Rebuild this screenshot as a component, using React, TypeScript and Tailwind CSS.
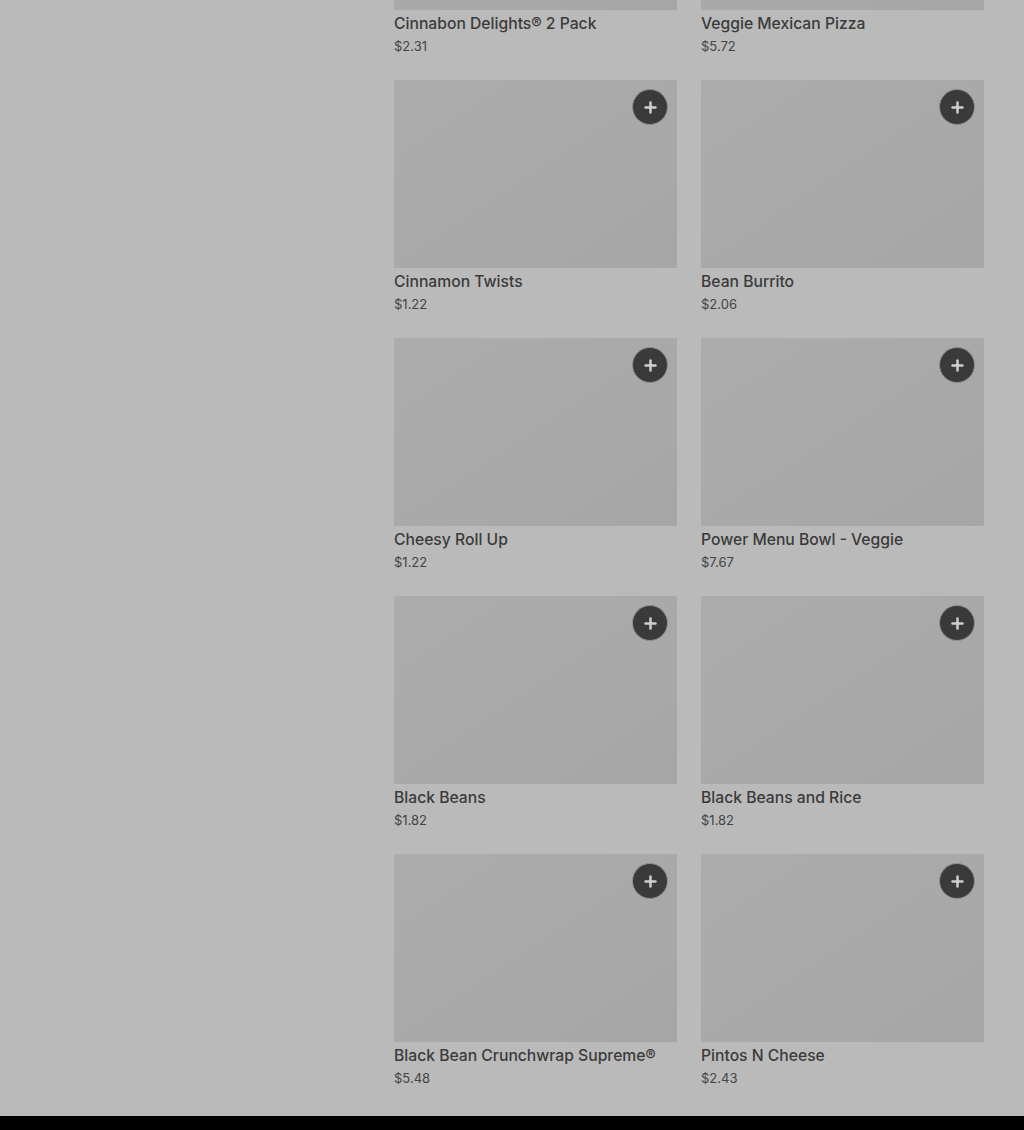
import { Plus } from "lucide-react"

interface Item {
  name: string
  price: string
}

const items: Item[] = [
  { name: "Cinnabon Delights® 2 Pack", price: "$2.31" },
  { name: "Veggie Mexican Pizza", price: "$5.72" },
  { name: "Cinnamon Twists", price: "$1.22" },
  { name: "Bean Burrito", price: "$2.06" },
  { name: "Cheesy Roll Up", price: "$1.22" },
  { name: "Power Menu Bowl - Veggie", price: "$7.67" },
  { name: "Black Beans", price: "$1.82" },
  { name: "Black Beans and Rice", price: "$1.82" },
  { name: "Black Bean Crunchwrap Supreme®", price: "$5.48" },
  { name: "Pintos N Cheese", price: "$2.43" },
]

function ItemCard({ item }: { item: Item }) {
  return (
    <div className="flex flex-col">
      <div className="relative h-[188px] w-full bg-gradient-to-br from-[#acacac] to-[#a6a6a6]">
        <button className="absolute right-[9px] top-[9px] flex h-9 w-9 items-center justify-center rounded-full border border-[#8f8f8f] bg-[#3a3a3a] text-[#cfcfcf]">
          <Plus className="h-[17px] w-[17px]" strokeWidth={3.5} />
        </button>
      </div>
      <div className="mt-[5px] text-[15.7px] font-medium leading-[18px] text-[#3b3b3b]">
        {item.name}
      </div>
      <div className="mt-[5px] text-[13px] leading-[16px] text-[#444444]">{item.price}</div>
    </div>
  )
}

export default function App() {
  return (
    <div
      className="flex h-[1130px] flex-col overflow-hidden bg-[#bababa]"
      style={{ fontFamily: "Inter, 'Noto Sans', sans-serif" }}
    >
      <div className="flex-1 overflow-hidden">
        <div className="ml-[394px] mt-[-178px] grid w-[590px] grid-cols-2 gap-x-6 gap-y-[26px]">
          {items.map((item) => (
            <ItemCard key={item.name} item={item} />
          ))}
        </div>
      </div>
      <div className="h-[14px] bg-black" />
    </div>
  )
}
